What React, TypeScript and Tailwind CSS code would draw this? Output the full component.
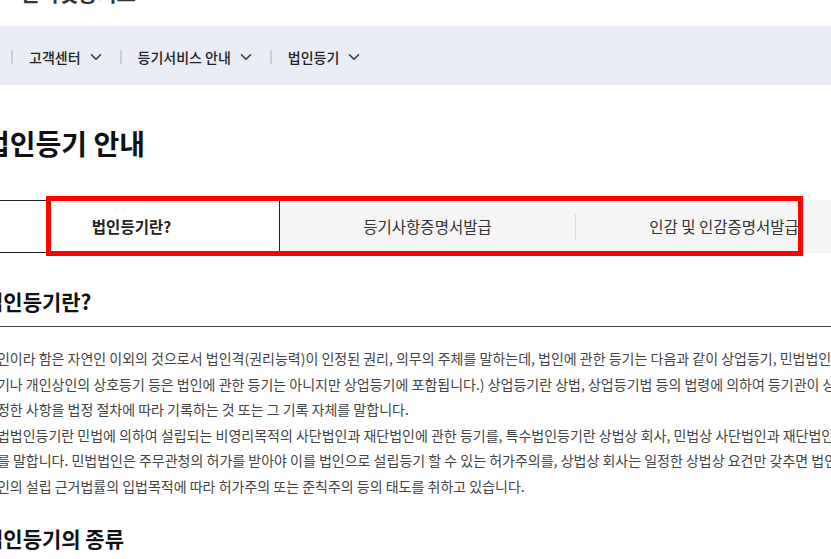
import React from "react";
import { ChevronDown } from "lucide-react";

const navItems = ["고객센터", "등기서비스 안내", "법인등기"];

const lines = [
  "법인이라 함은 자연인 이외의 것으로서 법인격(권리능력)이 인정된 권리, 의무의 주체를 말하는데, 법인에 관한 등기는 다음과 같이 상업등기, 민법법인등기, 특수법인등기로",
  "등기나 개인상인의 상호등기 등은 법인에 관한 등기는 아니지만 상업등기에 포함됩니다.) 상업등기란 상법, 상업등기법 등의 법령에 의하여 등기관이 상업등기부에",
  "규정한 사항을 법정 절차에 따라 기록하는 것 또는 그 기록 자체를 말합니다.",
  "민법법인등기란 민법에 의하여 설립되는 비영리목적의 사단법인과 재단법인에 관한 등기를, 특수법인등기란 상법상 회사, 민법상 사단법인과 재단법인 이외의",
  "기를 말합니다. 민법법인은 주무관청의 허가를 받아야 이를 법인으로 설립등기 할 수 있는 허가주의를, 상법상 회사는 일정한 상법상 요건만 갖추면 법인으로",
  "법인의 설립 근거법률의 입법목적에 따라 허가주의 또는 준칙주의 등의 태도를 취하고 있습니다.",
];

export default function App() {
  return (
    <div className="relative w-[831px] h-[559px] overflow-hidden bg-white font-['Noto_Sans_CJK_KR',sans-serif] text-[#222]">
      {/* top logo strip (cut off) */}
      <div className="h-[26px] overflow-hidden">
        <div className="ml-[20px] mt-[-21px] text-[21px] font-bold leading-[26px] text-[#333] whitespace-nowrap">
          인터넷등기소
        </div>
      </div>

      {/* nav bar */}
      <div className="h-[59px] bg-[#e9ecf4] flex items-center pl-[11px] pt-[3px]">
        {navItems.map((t) => (
          <div key={t} className="flex items-center">
            <div className="w-[2px] h-[14px] bg-[#c9cdd6]" />
            <div className="flex items-center pl-[16px] pr-[15px] gap-[6px]">
              <span className="text-[14px] font-medium text-[#222] whitespace-nowrap">{t}</span>
              <ChevronDown size={18} strokeWidth={2} className="text-[#333]" />
            </div>
          </div>
        ))}
      </div>

      {/* content */}
      <div className="ml-[-16px]">
        <h1 className="mt-[40px] text-[28px] font-bold leading-[36px] text-[#111] whitespace-nowrap">
          법인등기 안내
        </h1>

        {/* tabs */}
        <div className="mt-[39px] flex h-[53px] w-[900px]">
          <div className="w-[296px] h-full border-t border-b border-r border-[#222] bg-white flex items-center justify-center text-[15.5px] font-bold text-[#222]">
            법인등기란?
          </div>
          <div className="flex-1 h-full bg-[#f5f5f5] flex items-center">
            <div className="w-[295px] text-center text-[15.5px] text-[#333]">등기사항증명서발급</div>
            <div className="w-px h-[26px] bg-[#dcdcdc]" />
            <div className="w-[296px] text-center text-[15.5px] text-[#333] whitespace-nowrap">인감 및 인감증명서발급</div>
          </div>
        </div>

        {/* section */}
        <h2 className="mt-[34px] w-[900px] pb-[11px] border-b border-[#444] text-[21px] font-bold leading-[28px] text-[#111] whitespace-nowrap">
          법인등기란?
        </h2>

        <div className="mt-[19px] text-[14px] leading-[25.6px] text-[#444]">
          {lines.map((l, i) => (
            <div key={i} className="whitespace-nowrap">
              {l}
            </div>
          ))}
        </div>

        <h2 className="mt-[24px] text-[21px] font-bold leading-[28px] text-[#111] whitespace-nowrap">
          법인등기의 종류
        </h2>
      </div>

      {/* red highlight overlay */}
      <div className="absolute left-[46px] top-[196px] w-[757px] h-[60px] border-[5px] border-[#ff0000]" />
    </div>
  );
}
